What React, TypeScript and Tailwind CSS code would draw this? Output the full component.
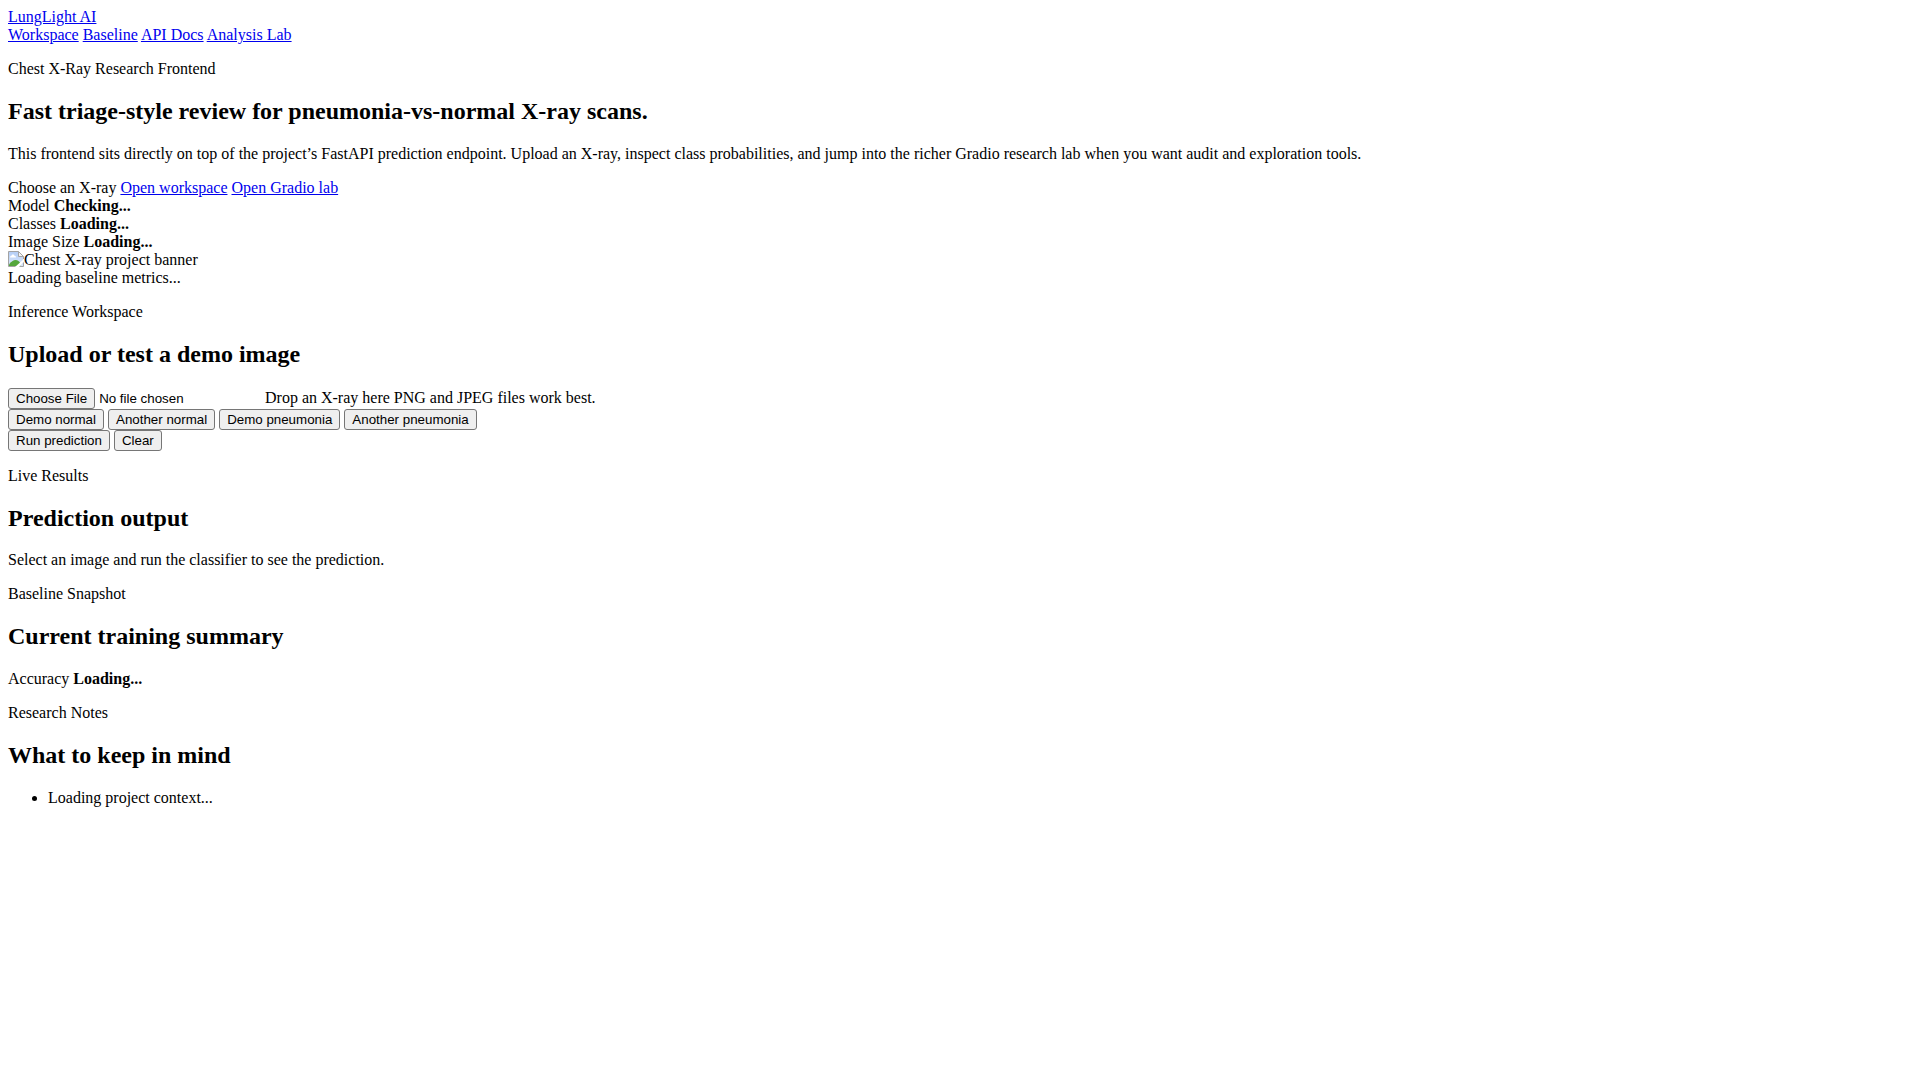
import { Fragment, useRef, useState, type ReactNode } from 'react'

const NAV = [
  { label: 'Workspace', href: '#workspace' },
  { label: 'Baseline', href: '#baseline' },
  { label: 'API Docs', href: '#docs' },
  { label: 'Analysis Lab', href: '#lab' },
]

const STATUS = [
  { label: 'Model', value: 'Checking...' },
  { label: 'Classes', value: 'Loading...' },
  { label: 'Image Size', value: 'Loading...' },
]

const DEMOS = ['Demo normal', 'Another normal', 'Demo pneumonia', 'Another pneumonia']

function TextLink({ href, children }: { href: string; children: ReactNode }) {
  return <a href={href} className="text-[#0000ee] underline">{children}</a>
}

function Button({ children, onClick }: { children: ReactNode; onClick?: () => void }) {
  return (
    <button
      type="button"
      onClick={onClick}
      className="rounded-[3px] border border-[#767676] bg-[#efefef] px-[7px] py-0.5 font-['Liberation_Sans',sans-serif] [font-size:revert] leading-[15px] hover:bg-[#e5e5e5]"
    >
      {children}
    </button>
  )
}

function SectionHead({ eyebrow, title }: { eyebrow: string; title: string }) {
  return (
    <>
      <p className="mt-4">{eyebrow}</p>
      <h2 className="[margin-block:revert] text-2xl leading-[27px] font-bold">{title}</h2>
    </>
  )
}

// Stand-in for the banner while there is no image file
function MissingImage({ alt }: { alt: string }) {
  return (
    <div role="img" aria-label={alt} className="flex">
      <svg width="16" height="16" viewBox="0 0 16 16" className="shrink-0">
        <defs>
          <linearGradient id="sky" x1="0" y1="0" x2="0" y2="1">
            <stop offset="0" stopColor="#b4cdf5" />
            <stop offset="1" stopColor="#dbe8fb" />
          </linearGradient>
        </defs>
        <path d="M.5.5h10l5 5v10H.5z" fill="url(#sky)" />
        <path d="M2 6.500c0-1.200.7-1.700 1.500-1.700.2-1.800 2.600-1.800 3 0 1 0 1.500.7 1.500 1.700z" fill="#fff" />
        <path d="M1 15v-1.500c2-3 4.500-4.500 6.500-4.500 2.300 0 4 1.500 5 3.500V15z" fill="#54a63c" />
        <path d="M16 8v2.500h-.5L11.500 16H7z" fill="#fff" />
        <path d="M10.500.5v5h5z" fill="#f4f4f4" />
        <path d="M15.500 8V5.500l-5-5H.5v15h7M10.500.5v5h5M11.500 15.500h4v-4" fill="none" stroke="#a3a3a3" />
      </svg>
      <span>{alt}</span>
    </div>
  )
}

export default function App() {
  const fileRef = useRef<HTMLInputElement>(null)
  const [demo, setDemo] = useState('')

  const clear = () => {
    setDemo('')
    if (fileRef.current) fileRef.current.value = ''
  }

  return (
    <div className="bg-white p-2 font-['Liberation_Serif',serif] text-base leading-[18px] text-black">
      <header>
        <TextLink href="#top">LungLight AI</TextLink>
        <nav>
          {NAV.map((n) => <Fragment key={n.label}><TextLink href={n.href}>{n.label}</TextLink>{' '}</Fragment>)}
        </nav>
      </header>

      <main>
        <section id="top">
          <SectionHead eyebrow="Chest X-Ray Research Frontend" title="Fast triage-style review for pneumonia-vs-normal X-ray scans." />
          <p className="mb-4">
            This frontend sits directly on top of the project’s FastAPI prediction endpoint. Upload an X-ray, inspect class
            probabilities, and jump into the richer Gradio research lab when you want audit and exploration tools.
          </p>
          <div className="flex flex-wrap gap-1">
            <label htmlFor="xray-file">Choose an X-ray</label>
            <TextLink href="#workspace">Open workspace</TextLink>
            <TextLink href="#lab">Open Gradio lab</TextLink>
          </div>
          {STATUS.map((s) => (
            <div key={s.label}>{s.label} <strong>{s.value}</strong></div>
          ))}
          <MissingImage alt="Chest X-ray project banner" />
          <div>Loading baseline metrics...</div>
        </section>

        <section id="workspace">
          <SectionHead eyebrow="Inference Workspace" title="Upload or test a demo image" />
          <label htmlFor="xray-file" className="flex items-baseline gap-1">
            <input
              ref={fileRef}
              id="xray-file"
              type="file"
              accept="image/png,image/jpeg"
              className="w-[253px] font-['Liberation_Sans',sans-serif] [font-size:revert] leading-[15px] file:mr-1 file:rounded-[3px] file:border file:border-solid file:border-[#767676] file:bg-[#efefef] file:px-[7px] file:py-0.5"
            />
            <span>Drop an X-ray here</span>
            <span>PNG and JPEG files work best.</span>
          </label>
          <div className="flex flex-wrap gap-1">
            {DEMOS.map((d) => <Button key={d} onClick={() => setDemo(d)}>{d}</Button>)}
          </div>
          <div className="flex flex-wrap gap-1">
            <Button>Run prediction</Button>
            <Button onClick={clear}>Clear</Button>
          </div>
        </section>

        <section>
          <SectionHead eyebrow="Live Results" title="Prediction output" />
          <div>{demo ? `${demo} selected.` : 'Select an image and run the classifier to see the prediction.'}</div>
        </section>

        <section id="baseline">
          <SectionHead eyebrow="Baseline Snapshot" title="Current training summary" />
          <div>Accuracy <strong>Loading...</strong></div>
        </section>

        <section>
          <SectionHead eyebrow="Research Notes" title="What to keep in mind" />
          <ul className="list-disc pl-10">
            <li>Loading project context...</li>
          </ul>
        </section>
      </main>
    </div>
  )
}
